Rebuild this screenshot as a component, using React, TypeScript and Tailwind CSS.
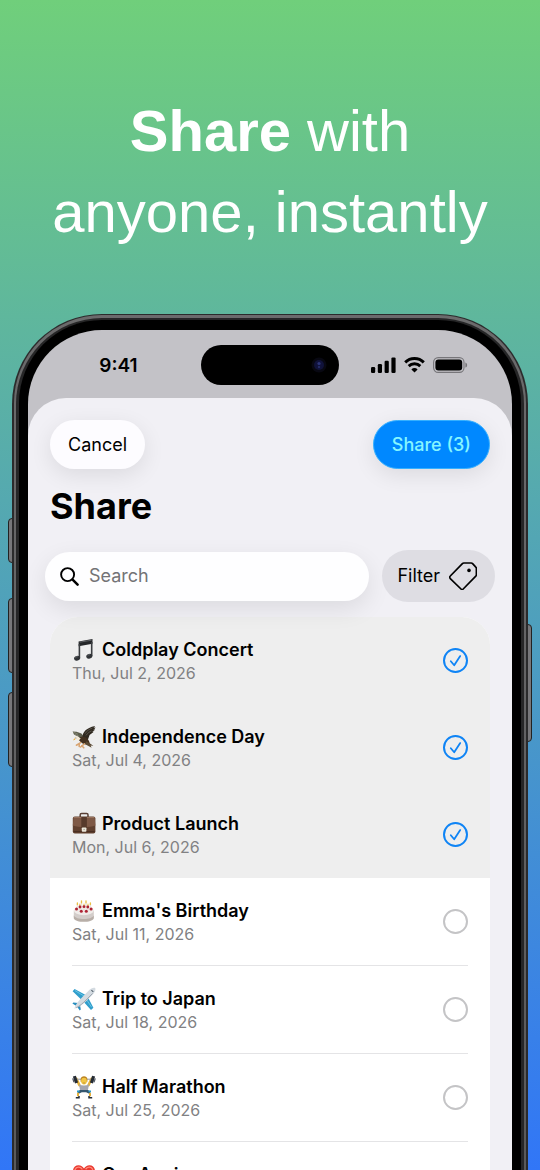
import { useState, type ReactNode } from "react";

export default function App() {
  const [selected, setSelected] = useState<number[]>([1, 2, 3]);

  const toggle = (id: number) =>
    setSelected((prev) =>
      prev.includes(id) ? prev.filter((item) => item !== id) : [...prev, id]
    );

  return (
    <div className="flex h-screen flex-col overflow-hidden bg-linear-to-b/srgb from-[#70cf7b] to-[#3176f7] font-['Inter','Liberation_Sans',sans-serif]">
      <h1 className="shrink-0 px-4 pt-[90px] pb-[62px] text-center font-['Liberation_Sans',Arial,sans-serif] text-[58px] leading-[81px] font-normal text-white">
        <strong className="font-bold">Share</strong> with
        <br />
        anyone, instantly
      </h1>

      {/* phone */}
      <div className="relative mx-3 flex min-h-0 flex-1 flex-col">
        <SideButtons />
        <div className="relative flex min-h-0 flex-1 flex-col rounded-t-[90px] bg-[#2b2b2c] px-[2px] pt-[1px]">
          <div className="flex min-h-0 flex-1 flex-col rounded-t-[88px] bg-linear-to-b from-[#6b6b6c] to-[#5a5a5b] px-[2px] pt-[3px]">
            <div className="flex min-h-0 flex-1 flex-col rounded-t-[86px] bg-[#262627] px-[3px] pt-[2px]">
              <div className="flex min-h-0 flex-1 flex-col rounded-t-[83px] bg-black px-[9px] pt-[10px]">
                <div className="flex min-h-0 flex-1 flex-col overflow-hidden rounded-t-[74px] bg-[#c3c2c7]">
                  <StatusBar />
                  <div className="min-h-0 flex-1 overflow-hidden rounded-t-[38px] bg-[#f1f0f5] pt-[22px]">
                    <div className="flex justify-between px-[22px]">
                      <button className="h-[49px] rounded-full bg-[#fdfcff] px-[18px] text-lg text-black shadow-[0_6px_22px_rgba(0,0,0,0.09)]">
                        Cancel
                      </button>
                      <button className="h-[49px] rounded-full border border-[#35b0ff] bg-[#0088ff] px-[18px] text-lg font-medium text-[#86f6ff] shadow-[0_6px_22px_rgba(0,0,0,0.09)]">
                        Share ({selected.length})
                      </button>
                    </div>
                    <h2 className="mt-[15px] px-[22px] text-4xl leading-[44px] font-bold text-black">
                      Share
                    </h2>

                    <div className="relative mt-[22px] flex items-center gap-[13px] px-[17px]">
                      <label className="flex h-[49px] min-w-0 flex-1 items-center gap-[10px] rounded-full bg-[#fefeff] pl-[15px] shadow-[0_8px_24px_rgba(0,0,0,0.09)]">
                        <SearchIcon />
                        <input
                          type="text"
                          placeholder="Search"
                          aria-label="Search"
                          className="min-w-0 flex-1 bg-transparent pr-4 text-lg text-black outline-none placeholder:text-[#737376]"
                        />
                      </label>
                      <button className="flex h-[52px] items-center gap-[9px] rounded-full bg-[#dedde3] pr-[18px] pl-[15px] text-lg text-black">
                        Filter
                        <TagIcon />
                      </button>
                    </div>

                    <ul className="mx-[22px] mt-[15px] overflow-hidden rounded-t-[28px] bg-white">
                      {events.map((item) => (
                        <EventRow
                          key={item.id}
                          item={item}
                          checked={selected.includes(item.id)}
                          onToggle={() => toggle(item.id)}
                        />
                      ))}
                    </ul>
                  </div>
                </div>
              </div>
            </div>
          </div>
        </div>
      </div>
    </div>
  );
}

type EventItem = {
  id: number;
  title: string;
  date: string;
  icon: ReactNode;
};

type RowProps = {
  item: EventItem;
  checked: boolean;
  onToggle: () => void;
};

function EventRow({ item, checked, onToggle }: RowProps) {
  return (
    <li className={checked ? "bg-[#eeeeee] px-[22px]" : "px-[22px]"}>
      <label
        className={
          checked
            ? "flex h-[87px] items-center justify-between"
            : "flex h-[88px] items-center justify-between border-b border-[#e4e4e6]"
        }
      >
        <span>
          <span className="flex items-center gap-[6px] text-lg leading-6 font-semibold text-black">
            <svg viewBox="0 0 24 24" className="size-6" aria-hidden="true">
              {item.icon}
            </svg>
            {item.title}
          </span>
          <span className="block text-base leading-[22px] text-[#818183]">
            {item.date}
          </span>
        </span>
        <span className="grid">
          <input
            type="checkbox"
            checked={checked}
            onChange={onToggle}
            className="col-start-1 row-start-1 size-[25px] appearance-none rounded-full border-2 border-[#c4c4c6] checked:border-[#0f84f5]"
          />
          {checked && (
            <svg
              viewBox="0 0 25 25"
              className="pointer-events-none col-start-1 row-start-1 size-[25px]"
              fill="none"
              stroke="#0f84f5"
              strokeWidth="1.8"
              strokeLinecap="round"
              strokeLinejoin="round"
            >
              <path d="M7.8 13.2l3.4 4.1 6-9.2" />
            </svg>
          )}
        </span>
      </label>
    </li>
  );
}

function StatusBar() {
  return (
    <div className="grid h-[68px] shrink-0 grid-cols-[1fr_138px_1fr] items-center pt-[2px]">
      <div className="pt-[2px] pl-2 text-center text-[19px] font-semibold text-black">
        9:41
      </div>
      <div className="flex h-10 items-center justify-end rounded-full bg-black pr-3">
        <svg viewBox="0 0 16 16" className="size-4">
          <circle cx="8" cy="8" r="7.5" fill="#080812" />
          <circle cx="8" cy="8" r="5" fill="#10123a" />
          <circle cx="8" cy="6.5" r="1.6" fill="#2c3578" />
          <circle cx="8" cy="10" r="1.2" fill="#232a66" />
        </svg>
      </div>
      <div className="flex items-center justify-center gap-2 pr-3">
        <svg viewBox="0 0 25 16" className="h-4 w-[25px]">
          <rect x="0" y="10" width="4.2" height="6" rx="1.2" />
          <rect x="6.8" y="7" width="4.2" height="9" rx="1.2" />
          <rect x="13.6" y="3.8" width="4.2" height="12.2" rx="1.2" />
          <rect x="20.4" y="0.4" width="4.2" height="15.6" rx="1.2" />
        </svg>
        <svg
          viewBox="0 0 21 16"
          className="h-4 w-[21px]"
          fill="none"
          stroke="#000"
          strokeWidth="2.9"
        >
          <path d="M1.2 5.4a13.2 13.2 0 0 1 18.6 0" />
          <path d="M4.7 9.1a8.2 8.2 0 0 1 11.6 0" />
          <path
            d="M10.5 15.6l-3.1-3.2a4.4 4.4 0 0 1 6.2 0z"
            fill="#000"
            stroke="none"
          />
        </svg>
        <svg viewBox="0 0 35 16" className="h-4 w-[35px]">
          <rect
            x="0.6"
            y="0.6"
            width="30.4"
            height="14.8"
            rx="4.6"
            fill="none"
            stroke="#77767a"
            strokeWidth="1.1"
          />
          <rect x="2.4" y="2.4" width="26.8" height="11.2" rx="3" />
          <path d="M32.4 5.4c2.3.7 2.3 4.5 0 5.2z" fill="#77767a" />
        </svg>
      </div>
    </div>
  );
}

/* hardware buttons on the phone's edges */
function SideButtons() {
  return (
    <>
      <div className="absolute top-[204px] -left-1 h-[45px] w-[6px] rounded-l-sm border border-[#222] bg-[#77777a]" />
      <div className="absolute top-[284px] -left-1 h-[75px] w-[6px] rounded-l-sm border border-[#222] bg-[#77777a]" />
      <div className="absolute top-[378px] -left-1 h-[75px] w-[6px] rounded-l-sm border border-[#222] bg-[#77777a]" />
      <div className="absolute top-[310px] -right-1 h-[118px] w-[6px] rounded-r-sm border border-[#222] bg-[#77777a]" />
    </>
  );
}

function SearchIcon() {
  return (
    <svg
      viewBox="0 0 19 19"
      className="size-[19px]"
      fill="none"
      stroke="#000"
      strokeLinecap="round"
    >
      <circle cx="7.6" cy="7.6" r="6.5" strokeWidth="1.9" />
      <path d="M12.6 12.6l5 5" strokeWidth="2.5" />
    </svg>
  );
}

function TagIcon() {
  return (
    <svg viewBox="0 0 28 28" className="size-7">
      <path
        d="M14.8 1h7.4a2 2 0 0 1 1.4.6l3.2 3.5a2 2 0 0 1 .6 1.4v6.2a2 2 0 0 1-.6 1.4L14.2 27a1.6 1.6 0 0 1-2.2 0L1.3 16.6a1.8 1.8 0 0 1 0-2.6L13.4 1.6A2 2 0 0 1 14.8 1z"
        fill="none"
        stroke="#000"
        strokeWidth="1.7"
      />
      <circle cx="20" cy="8.4" r="1.8" />
    </svg>
  );
}

const events: EventItem[] = [
  {
    id: 1,
    title: "Coldplay Concert",
    date: "Thu, Jul 2, 2026",
    icon: (
      <>
        <path d="M6.6 3.4L20.5 1v4.8L6.6 8.2z" fill="#242628" />
        <path
          d="M7.4 6v14M19.7 4v14"
          stroke="#3b3e41"
          strokeWidth="1.6"
          fill="none"
        />
        <ellipse cx="5.1" cy="20.2" rx="3.1" ry="2.3" fill="#303336" transform="rotate(-15 5.1 20.2)" />
        <ellipse cx="17.3" cy="18.2" rx="3.1" ry="2.3" fill="#303336" transform="rotate(-15 17.3 18.2)" />
        <path d="M7.6 4.2l12-2" stroke="#75797d" strokeWidth=".7" />
        <path d="M3.4 19.8c.5-.8 1.4-1.2 2.3-1.1M15.6 17.8c.5-.8 1.4-1.2 2.3-1.1" stroke="#85898d" strokeWidth=".6" fill="none" />
      </>
    ),
  },
  {
    id: 2,
    title: "Independence Day",
    date: "Sat, Jul 4, 2026",
    icon: (
      <>
        <path d="M.6 6.6l4 .2 4.8 1.6 2.6 3.4-4 1.8L4.8 11 2 9.6z" fill="#5c5d4c" />
        <path d="M1 7l5 2.2M2.6 9.4l4 1.4" stroke="#949582" strokeWidth=".7" />
        <path d="M10.4 12.6c.2-5.2 3.2-9.6 12.8-11.6-.5.9-1.1 1.3-2 1.7l2.4-.3c-.7 1.3-1.5 1.7-2.5 2l2 .1c-.8 1.3-2 1.7-3 1.9l1.6.3c-1.4 1.5-2.9 2.2-4.1 3.3l-1.8 5z" fill="#30291f" />
        <path d="M13 8.6c1.8-2.8 4.6-4.6 7.4-5.6M14 10.4c1.5-2.2 3.4-3.6 5.6-4.5" stroke="#73716a" strokeWidth=".6" fill="none" />
        <path d="M5.4 13.2c2.8-2 7.2-2 9.4 0 2 1.8 2.8 3.7 3 5.5-3.4 1.2-7.4.4-9.4-2z" fill="#42301f" />
        <path d="M14.6 16.2l6.8 4.6-2.8-.2 1 2.2-6.8-3.8z" fill="#5b4a34" />
        <path d="M1.7 13.4c.4-1.8 2.5-2.6 4.4-1.8l2.6 2-2.2 2.2c-1.2-1.2-2-1.5-3.3-1.3z" fill="#f2ead9" />
        <path d="M2.2 13.2l-1 2.2 2.2-.8z" fill="#e7ae3c" />
        <circle cx="3.9" cy="13" r=".45" fill="#30291f" />
        <path d="M8.6 17.6l-4.2 2.6M7.2 18.6v2.8M12.4 18.8l-3.8 3.2M9.8 20.8l2 2" stroke="#d9a572" strokeWidth="1.6" strokeLinecap="round" />
      </>
    ),
  },
  {
    id: 3,
    title: "Product Launch",
    date: "Mon, Jul 6, 2026",
    icon: (
      <>
        <path d="M8.2 5V2.8c0-.8.6-1.3 1.4-1.3h5c.8 0 1.4.5 1.4 1.3V5" fill="none" stroke="#5a4035" strokeWidth="1.5" />
        <rect x=".8" y="4.6" width="22.6" height="16.8" rx="2" fill="#60402f" />
        <path d="M1.6 5.2h21l.8 8.2c-6.6 2.2-16 2.2-22.6 0z" fill="#7e5946" />
        <path d="M1.8 5.5h20.6" stroke="#a17b63" strokeWidth=".8" />
        <path d="M9.3 5h5.6v12H9.3z" fill="#573a2b" />
        <path d="M1.5 19.6h21.2" stroke="#452b20" strokeWidth=".9" />
        <rect x="9.8" y="15.5" width="4.6" height="4.3" rx=".8" fill="#eee9dc" />
        <circle cx="12.1" cy="17.5" r=".7" fill="#a19c8f" />
      </>
    ),
  },
  {
    id: 4,
    title: "Emma's Birthday",
    date: "Sat, Jul 11, 2026",
    icon: (
      <>
        <path d="M1.8 11.6v6.2c0 2.6 4.6 4.2 10 4.2s10-1.6 10-4.2v-6.2z" fill="#d3cdca" />
        <path d="M1.8 16.4c1 2.2 5.4 3.6 10 3.6s9-1.4 10-3.6v3c-1 2.2-5.4 3.4-10 3.4s-9-1.2-10-3.4z" fill="#b8afa8" />
        <ellipse cx="11.8" cy="11.6" rx="10" ry="4.6" fill="#f0ece9" />
        <path d="M5.4 4.5v6M9.5 3.4v5.8M14 3.4v5.8M18.4 4.5v6M7.8 6v6.4M12 6.4v6.2M16 6v6.4" stroke="#ece4dd" strokeWidth="1.5" />
        <path d="M5.4 3.8v1.8M9.5 1.8v2M14 1.8v2M18.4 3.8v1.8" stroke="#eac044" strokeWidth="1.3" strokeLinecap="round" />
        <path d="M7.8 5v1.6M12 5v1.6M16 5v1.6" stroke="#edca59" strokeWidth="1.2" strokeLinecap="round" />
        <g fill="#ad2334">
          <circle cx="4.5" cy="10" r="1.5" />
          <circle cx="8" cy="8" r="1.4" />
          <circle cx="12" cy="7.7" r="1.4" />
          <circle cx="15.8" cy="8" r="1.4" />
          <circle cx="19.1" cy="10" r="1.5" />
          <circle cx="9.3" cy="12.2" r="1.5" />
          <circle cx="14.3" cy="12.2" r="1.5" />
        </g>
      </>
    ),
  },
  {
    id: 5,
    title: "Trip to Japan",
    date: "Sat, Jul 18, 2026",
    icon: (
      <>
        <path d="M14.6 8.4L2.6 2 .6 4.2l9.6 9.4zM15.4 9.2l6 11.6-2.4 2.2-8.6-9.6z" fill="#309ecc" />
        <path d="M6.1 16.1l-4.7-.6-1 1 4.8 2.9zM8 18l.8 4.6-1.1.9-3-4.6z" fill="#278dbe" />
        <path d="M3 3.6l9 5.4M19.6 20.2l-5.2-7.8" stroke="#75cce9" strokeWidth=".8" />
        <path d="M2.3 21.8c1.2-4.4 4.6-8.3 8.1-11.8l6.4-6.6C19 1.2 21.6.2 23.2 1c.8 1.6-.2 4.2-2.4 6.4l-6.4 6.6c-3.5 3.5-7.6 6.6-12.1 7.8z" fill="#d4dbe1" />
        <path d="M4.3 20.7c3.8-1.9 6.7-4.6 9.8-7.7L20.6 6.4" stroke="#9da7b1" strokeWidth="1" fill="none" />
        <path d="M19.4 3.1l1.9 1.8" stroke="#52616c" strokeWidth="1.1" />
      </>
    ),
  },
  {
    id: 6,
    title: "Half Marathon",
    date: "Sat, Jul 25, 2026",
    icon: (
      <>
        <path d="M4.4 3.8l3 6.4M19.5 3.8l-3 6.4" stroke="#e7b23a" strokeWidth="2.6" strokeLinecap="round" />
        <path d="M2 4.2h20" stroke="#95999d" strokeWidth="1" />
        <path d="M.9 1.5l3-.8 2.2 6.9-3.1 1zM23.1 1.5l-3-.8-2.2 6.9 3.1 1z" fill="#252b34" />
        <path d="M.1 3.6l1.3-.4 1.2 3.8-1.2.4zM23.9 3.6l-1.3-.4-1.2 3.8 1.2.4z" fill="#555c67" />
        <path d="M8.6 4.5c0-4.3 6.8-4.3 6.8 0v2.3H8.6z" fill="#b98220" />
        <ellipse cx="12" cy="6.1" rx="2.9" ry="3.4" fill="#f2c543" />
        <path d="M10.8 7.7c.8.5 1.6.5 2.4 0" stroke="#8f5f24" strokeWidth=".5" fill="none" />
        <path d="M7 9.2c3 1.7 7 1.7 10 0l-1.2 6.9H8.2z" fill="#a4a5ae" />
        <path d="M8 15h8l2.6 1.6-.8 2.4-3.7-1.7h-4.3L6.2 19l-.9-2.4z" fill="#34566e" />
        <path d="M6 17.7v3.6M18 17.7v3.6" stroke="#e6b139" strokeWidth="2" />
        <path d="M5 16.4h2.5M16.5 16.4H19" stroke="#279bcc" strokeWidth="1.8" />
        <path d="M7 21v1.8H3.8M17 21v1.8h3.2" stroke="#252b34" strokeWidth="1.5" fill="none" />
      </>
    ),
  },
  {
    id: 7,
    title: "Our Anniversary",
    date: "Sun, Aug 2, 2026",
    icon: (
      <>
        <path d="M12 22C6 17.8 1 13.4 1 8c0-3.4 2.5-5.8 5.5-5.8 2.4 0 4.4 1.3 5.5 3.3 1.1-2 3.1-3.3 5.5-3.3C20.5 2.2 23 4.6 23 8c0 5.4-5 9.8-11 14z" fill="#e9382f" />
        <path d="M3.1 6.5C4.3 3.5 8.4 3.3 10 6M14 5.8c2-2.5 5.3-2.1 6.6.5" stroke="#ff8b7b" strokeWidth="1.4" strokeLinecap="round" fill="none" />
      </>
    ),
  },
];
